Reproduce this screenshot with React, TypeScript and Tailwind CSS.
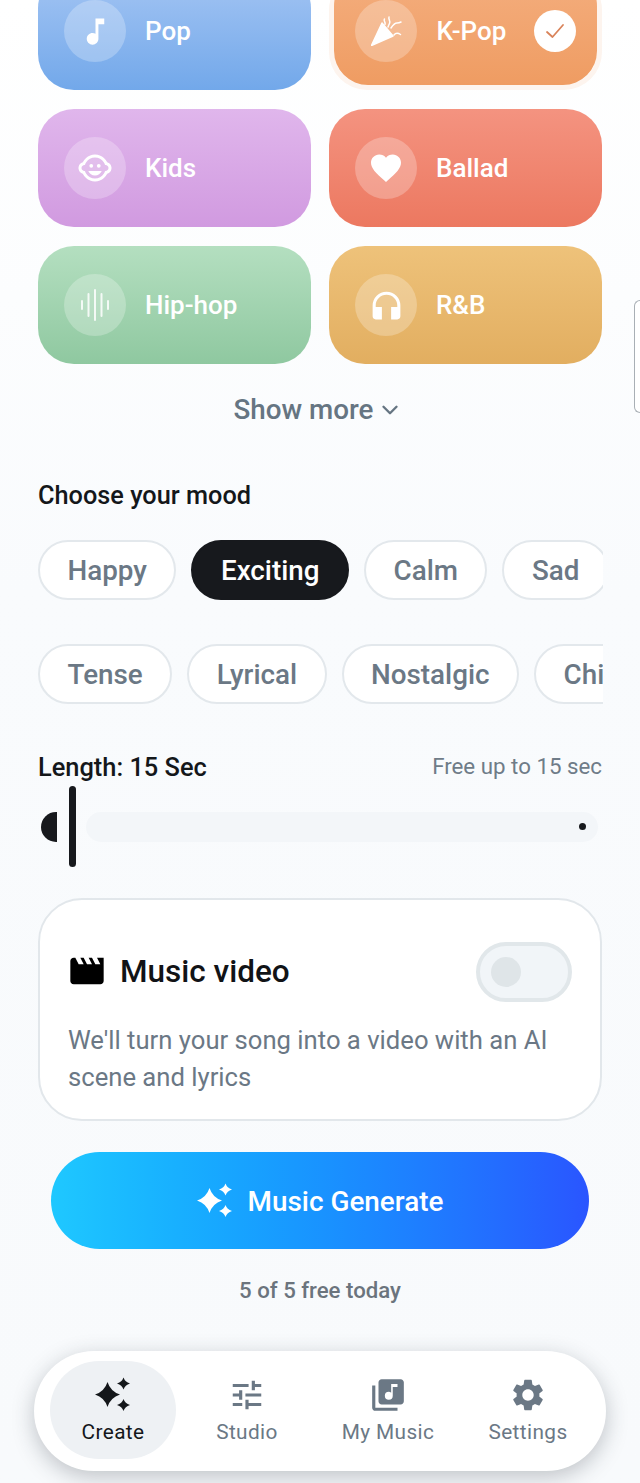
import { ChevronDown } from "lucide-react"
import {
  MdMusicNote,
  MdOutlineChildCare,
  MdFavorite,
  MdHeadphones,
  MdMovie,
  MdTune,
  MdLibraryMusic,
  MdSettings,
} from "react-icons/md"

function Sparkles({ className }: { className?: string }) {
  return (
    <svg viewBox="0 0 36 36" className={className} fill="currentColor">
      <path d="M12.500 5Q15.500 14.500 25 17.500 15.500 20.500 12.500 30 9.500 20.500 0 17.500 9.500 14.500 12.500 5z" />
      <path d="M28.500 0.500Q30 5 35 6.500 30 8 28.500 12.500 27 8 22 6.500 27 5 28.500 0.500z" />
      <path d="M28.500 22Q30 26.500 35 28 30 29.500 28.500 34 27 29.500 22 28 27 26.500 28.500 22z" />
    </svg>
  )
}

function Waveform() {
  return (
    <svg viewBox="0 0 30 32" className="w-[30px] h-[32px]" stroke="white" strokeWidth="2" strokeLinecap="round" opacity="0.85">
      <path d="M2 12v8M8.500 5v22M15 1v30M21.500 5v22M28 12v8" />
    </svg>
  )
}

function Party() {
  return (
    <svg viewBox="0 0 32 30" className="w-[32px] h-[30px] ml-[2px]" fill="none" stroke="white" strokeWidth="1.500" strokeLinecap="round" strokeLinejoin="round">
      <path d="M0.500 29.500L11 7l11 13z" fill="white" stroke="white" />
      <path d="M13.500 3c-1.500 2 1.500 3 .5 5.500" />
      <path d="M18 1c-1 2.500 2 4 .5 6.500-.5 1-1 2-1.500 3.500" />
      <path d="M20 12c2-3 4-5 6-5s2 0 4-1" />
      <path d="M23 19c1.500-2 3.500-2.500 6.500-.5" />
    </svg>
  )
}

function Check() {
  return (
    <div className="w-[42px] h-[42px] rounded-full bg-white flex items-center justify-center mt-[5px]">
      <svg viewBox="0 0 24 24" className="w-[24px] h-[24px]" fill="none" stroke="#d9835a" strokeWidth="1.800" strokeLinecap="round" strokeLinejoin="round">
        <path d="M4 13l5.500 5L20 6" />
      </svg>
    </div>
  )
}

function GenreCard({ label, icon, gradient }: { label: string; icon: React.ReactNode; gradient: string }) {
  return (
    <div className={`h-[118px] rounded-[36px] flex items-center pl-[26px] pr-[25px] ${gradient}`}>
      <div className="w-[62px] h-[62px] rounded-full bg-white/25 flex items-center justify-center text-white shrink-0">
        {icon}
      </div>
      <span className="ml-[19px] pt-[1px] text-[26px] font-medium text-white flex-1">{label}</span>
    </div>
  )
}

function Chip({ label, active }: { label: string; active?: boolean }) {
  return (
    <div
      className={`h-[60px] px-[27.500px] pt-[2px] rounded-full flex items-center shrink-0 text-[27.800px] font-medium border-2 ${
        active ? "bg-[#17191d] border-[#17191d] text-white" : "bg-white border-[#e3e8ec] text-[#6b7885]"
      }`}
    >
      {label}
    </div>
  )
}

function NavItem({
  label,
  icon,
  active,
  className,
}: {
  label: string
  icon: React.ReactNode
  active?: boolean
  className?: string
}) {
  return (
    <div
      className={`h-[98px] flex flex-col items-center justify-center ${
        active ? "bg-[#eef1f4] rounded-[49px] text-[#14171a]" : "text-[#6b7885]"
      } ${className ?? ""}`}
    >
      <div className="h-[38px] flex items-center justify-center">{icon}</div>
      <span className="mt-[5px] text-[20.800px] leading-[26px] tracking-[0.4px]">{label}</span>
    </div>
  )
}

export default function App() {
  return (
    <div className="relative w-[640px] h-[1483px] overflow-hidden font-['Roboto',sans-serif] bg-gradient-to-b from-white via-[#f9fbfd] via-40% to-[#f8fafc]">
      <div className="absolute right-0 top-[300px] w-[6px] h-[113px] rounded-l-[6px] border border-r-0 border-[#a9afb5] bg-white" />

      <div className="flex flex-col px-[38px] -mt-[28px]">
        <div className="grid grid-cols-2 gap-x-[18px] gap-y-[19px]">
          <GenreCard label="Pop" gradient="bg-gradient-to-b from-[#a4c5f3] to-[#72a8ea]" icon={<MdMusicNote size={35} />} />
          <div className="h-[118px] rounded-[38px] border-[5px] border-t-0 border-[#fdf4ee]">
            <div className="h-[113px] rounded-[34px] flex items-center pl-[21px] pr-[21px] bg-gradient-to-b from-[#f4ae7e] to-[#ef9c62]">
              <div className="w-[62px] h-[62px] rounded-full bg-white/25 flex items-center justify-center text-white shrink-0 mt-[5px]">
                <Party />
              </div>
              <span className="ml-[19.500px] pt-[6px] text-[26px] font-medium text-white flex-1">K-Pop</span>
              <Check />
            </div>
          </div>
          <GenreCard label="Kids" gradient="bg-gradient-to-b from-[#e0b6ec] to-[#d19ae0]" icon={<MdOutlineChildCare size={36} />} />
          <GenreCard label="Ballad" gradient="bg-gradient-to-b from-[#f49380] to-[#ec7860]" icon={<MdFavorite size={36} />} />
          <GenreCard label="Hip-hop" gradient="bg-gradient-to-b from-[#b4dfc0] to-[#8fc8a0]" icon={<Waveform />} />
          <GenreCard label="R&B" gradient="bg-gradient-to-b from-[#eec27a] to-[#e2ae60]" icon={<MdHeadphones size={37} />} />
        </div>

        <div className="mt-[25px] h-[40px] flex items-center justify-center pr-[4px] pt-[2px] text-[#667582]">
          <span className="text-[27.800px] font-medium">Show more</span>
          <ChevronDown className="w-[26px] h-[26px] ml-[3px]" strokeWidth={2.200} />
        </div>

        <h2 className="mt-[49px] h-[34px] pt-[2px] flex items-center text-[25.300px] font-medium text-[#14171a]">Choose your mood</h2>

        <div className="mt-[28px] w-[565px] flex gap-[15px] overflow-hidden">
          <Chip label="Happy" />
          <Chip label="Exciting" active />
          <Chip label="Calm" />
          <Chip label="Sad" />
        </div>
        <div className="mt-[44px] w-[565px] flex gap-[15px] overflow-hidden">
          <Chip label="Tense" />
          <Chip label="Lyrical" />
          <Chip label="Nostalgic" />
          <Chip label="Chill" />
        </div>

        <div className="mt-[46px] h-[34px] flex items-center justify-between">
          <span className="text-[25.400px] font-medium text-[#14171a]">Length: 15 Sec</span>
          <span className="text-[22.300px] text-[#6f7c88]">Free up to 15 sec</span>
        </div>

        <div className="mt-[2px] h-[81px] flex items-center pl-[3px] pr-[4px]">
          <div className="w-[16px] h-[30px] rounded-l-full bg-[#17191d]" />
          <div className="ml-[12px] w-[7px] h-[81px] rounded-full bg-[#17191d]" />
          <div className="ml-[10px] flex-1 h-[30px] rounded-full bg-[#f3f6f9] flex items-center justify-end pr-[12px]">
            <div className="w-[7px] h-[7px] rounded-full bg-[#17191d]" />
          </div>
        </div>

        <div className="mt-[31px] h-[223px] rounded-[44px] border-2 border-[#e2e7eb] bg-white px-[28px] pt-[42px]">
          <div className="flex items-center h-[60px]">
            <MdMovie size={40} className="text-black -ml-[1px] -mt-[2px]" />
            <span className="ml-[13px] text-[31.500px] font-medium text-[#111316] flex-1">Music video</span>
            <div className="w-[96px] h-[60px] rounded-full border-[4px] border-[#e1e7ea] bg-[#f1f5f8] flex items-center pl-[11px]">
              <div className="w-[30px] h-[30px] rounded-full bg-[#dfe5e8]" />
            </div>
          </div>
          <p className="mt-[20px] text-[25.650px] leading-[37px] text-[#6b7885]">
            We'll turn your song into a video with an AI scene and lyrics
          </p>
        </div>

        <div className="mt-[31px] mx-[13px] h-[97px] rounded-full bg-gradient-to-r from-[#1fc8ff] to-[#2a55ff] flex items-center justify-center text-white">
          <Sparkles className="w-[36px] h-[36px]" />
          <span className="ml-[15px] pt-[2px] text-[27.900px] font-medium">Music Generate</span>
        </div>

        <div className="mt-[26px] h-[30px] pt-[2px] flex items-center justify-center text-[22.200px] font-medium text-[#6b747d]">
          5 of 5 free today
        </div>

        <div className="mt-[46px] -mx-[4px] h-[120px] rounded-full bg-white shadow-[0_6px_22px_rgba(40,50,60,0.28)] flex items-start pt-[10px] pl-[16px]">
          <NavItem label="Create" active className="w-[126px]" icon={<Sparkles className="w-[36px] h-[36px]" />} />
          <NavItem label="Studio" className="w-[142px]" icon={<MdTune size={38} />} />
          <NavItem label="My Music" className="w-[140px]" icon={<MdLibraryMusic size={38} />} />
          <NavItem label="Settings" className="w-[140px]" icon={<MdSettings size={38} />} />
        </div>
      </div>
    </div>
  )
}
